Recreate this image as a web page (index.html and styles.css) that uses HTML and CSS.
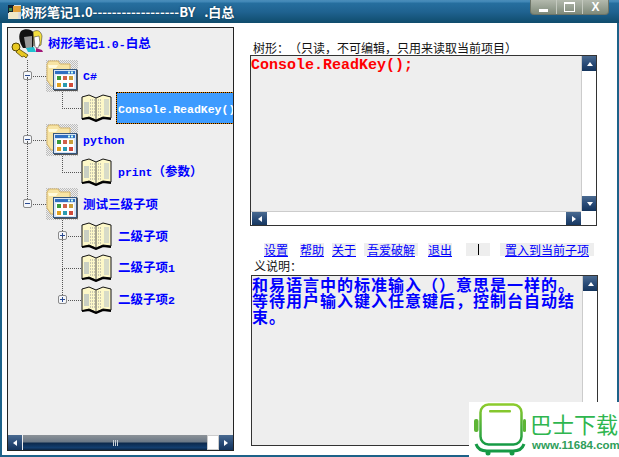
FILE: index.html
```html
<!doctype html>
<html>
<head>
    <meta charset="UTF-8">
    <title>树形笔记1.0</title>
    <link rel="stylesheet" href="styles.css">
</head>
<body>
<svg class="defs" width="0" height="0">
    <defs>
        <pattern id="checker" width="2" height="2" patternUnits="userSpaceOnUse">
            <rect width="2" height="2" fill="#eee"/>
            <rect width="1" height="1" fill="#bbb"/>
            <rect x="1" y="1" width="1" height="1" fill="#bbb"/>
        </pattern>
        <symbol id="i-folder" viewBox="0 0 32 32">
            <rect width="32" height="32" fill="url(#checker)"/>
            <path d="M1 4 L3 1 H12 L14 4 H24 V10 H9 V26 H5 L1 20Z" fill="#f7e4a4" stroke="#d3b36a"/>
            <path d="M2 5 H12 L10 8 H3Z" fill="#fffadb"/>
            <rect x="7.500" y="9.500" width="23" height="20" fill="#d8e4f4" stroke="#35577f"/>
            <rect x="9" y="11" width="20" height="3" fill="#2f6fc2"/>
            <rect x="22" y="11.500" width="2" height="2" fill="#cfe"/><rect x="25" y="11.500" width="2" height="2" fill="#cfe"/>
            <rect x="10" y="15" width="18" height="13" fill="#fff"/>
            <rect x="11" y="16" width="4" height="4" fill="#3a9a3c"/><rect x="17" y="16" width="4" height="4" fill="#d0604a"/><rect x="23" y="16" width="4" height="4" fill="#c9a03a"/>
            <rect x="11" y="23" width="4" height="4" fill="#e0a020"/><rect x="17" y="23" width="4" height="4" fill="#2a9ab0"/><rect x="23" y="23" width="4" height="4" fill="#d04a3a"/>
            <path d="M8 30.500 H31.500 V10" stroke="#555" fill="none"/>
        </symbol>
        <symbol id="i-book" viewBox="0 0 31 28">
            <path d="M1 3 L8 1 L15 4 L22 1 L30 3 V24 L22 23 L15 26 L8 23 L1 25Z" fill="#fdf8c8" stroke="#111"/>
            <path d="M15 4 V26" stroke="#555"/>
            <path d="M1 25 L8 24 L15 27 L22 24 L30 25" fill="none" stroke="#000" stroke-width="2"/>
            <rect x="3" y="8" width="5" height="12" fill="#c9cfc2"/>
            <path d="M9 6 H14 M9 9 H14 M9 12 H14 M9 15 H14 M9 18 H14 M9 21 H14" stroke="#999" stroke-dasharray="1 1"/>
            <path d="M17 6 H21 M17 9 H21 M17 12 H21 M17 15 H21 M17 18 H21 M17 21 H21" stroke="#999" stroke-dasharray="1 1"/>
            <rect x="23" y="5" width="5" height="16" fill="#d7dbc8"/>
        </symbol>
        <symbol id="i-users" viewBox="0 0 32 32">
            <path d="M10 3 C14 0 21 1 23 5 L22 20 H12 C8 14 7 7 10 3Z" fill="#111"/>
            <path d="M13 9 L21 8 V20 L15 21Z" fill="#999"/>
            <path d="M15 20 L23 19 L25 24 H17Z" fill="#20c0d0"/>
            <path d="M25 20 L31 22 L32 24 H25Z" fill="#a01878"/>
            <path d="M22 4 C26 1 30 3 31 8 L30 17 L28 18 L27 10 L24 9 L23 18Z" fill="#f4e040" stroke="#222" stroke-width=".5"/>
            <path d="M23 9 L28 8 L29 15 L27 20 L24 19Z" fill="#fff" stroke="#333" stroke-width=".5"/>
            <circle cx="5" cy="19" r="4" fill="#e8c820" stroke="#554400"/>
            <path d="M8 21 L17 27 L15 30 L13 28 L11 29 L5 24Z" fill="#e8c820" stroke="#554400" stroke-width=".8"/>
        </symbol>
    </defs>
</svg>

<div class="window">
    <div class="title-bar">
        <svg class="app-icon" viewBox="0 0 13 14" width="13" height="14">
            <rect width="13" height="14" fill="#ddd"/>
            <rect x="0" y="0" width="6" height="8" fill="#123"/>
            <rect x="5" y="1" width="8" height="6" fill="#e2a03a"/>
            <rect x="1" y="7" width="9" height="7" fill="#f0e8c8"/>
            <rect x="1" y="3" width="3" height="3" fill="#3a8a4a"/>
        </svg>
        <span class="title-text">树形笔记1.0------------------BY&nbsp;&nbsp; .白总</span>
        <div class="win-btns">
            <span class="win-btn"><i class="g-min"></i></span>
            <span class="win-btn"><i class="g-max"></i></span>
            <span class="win-btn g-close">X</span>
        </div>
    </div>

    <div class="client">
        <div class="tree-panel">
            <ul class="tree">
                <li class="row root"><svg class="ico-user"><use href="#i-users"/></svg><span class="lbl">树形笔记<span class="lat">1.0-</span>白总</span></li>
                <li class="row d1 e16"><b class="exp minus"></b><svg class="ico-folder"><use href="#i-folder"/></svg><span class="lbl"><span class="lat">C#</span></span></li>
                <li class="row d2 e16"><svg class="ico-book"><use href="#i-book"/></svg><span class="lbl sel"><span class="lat">Console.ReadKey()</span></span></li>
                <li class="row d1 e64"><b class="exp minus"></b><svg class="ico-folder"><use href="#i-folder"/></svg><span class="lbl"><span class="lat">python</span></span></li>
                <li class="row d2 e16"><svg class="ico-book"><use href="#i-book"/></svg><span class="lbl"><span class="lat">print</span>（参数）</span></li>
                <li class="row d1 e64"><b class="exp minus"></b><svg class="ico-folder"><use href="#i-folder"/></svg><span class="lbl">测试三级子项</span></li>
                <li class="row d2 e16"><b class="exp plus"></b><svg class="ico-book"><use href="#i-book"/></svg><span class="lbl">二级子项</span></li>
                <li class="row d2 e32"><svg class="ico-book"><use href="#i-book"/></svg><span class="lbl">二级子项<span class="lat">1</span></span></li>
                <li class="row d2 e32"><b class="exp plus"></b><svg class="ico-book"><use href="#i-book"/></svg><span class="lbl">二级子项<span class="lat">2</span></span></li>
            </ul>
            <div class="tree-scroll">
                <span class="dark-btn"><i class="arr left"></i></span>
                <span class="tree-thumb"><em></em><em></em><em></em></span>
                <span class="white-knob"></span>
                <span class="dark-btn"><i class="arr right"></i></span>
            </div>
        </div>

        <div class="side">
            <p class="cap cap-top">树形：（只读，不可编辑，只用来读取当前项目）</p>
            <div class="box box-code">
                <div class="box-text code">Console.ReadKey();</div>
                <div class="vbar">
                    <span class="dark-btn"><i class="arr up"></i></span>
                    <span class="dark-btn"><i class="arr down"></i></span>
                </div>
                <div class="hbar">
                    <span class="dark-btn"><i class="arr left"></i></span>
                    <span class="dark-btn"><i class="arr right"></i></span>
                </div>
                <div class="corner"></div>
            </div>

            <div class="links">
                <a class="lk w-sz" href="#">设置</a>
                <a class="lk w-bz" href="#">帮助</a>
                <a class="lk w-gy" href="#">关于</a>
                <a class="lk w-wa" href="#">吾爱破解</a>
                <a class="lk w-tc" href="#">退出</a>
                <span class="lk w-sep"><i></i></span>
                <a class="lk w-zr" href="#">置入到当前子项</a>
            </div>

            <p class="cap cap-note">义说明：</p>
            <div class="box box-note">
                <div class="box-text note">和易语言中的标准输入（）意思是一样的。等待用户输入键入任意键后，控制台自动结束。</div>
                <div class="vbar">
                    <span class="dark-btn"><i class="arr up"></i></span>
                    <span class="dark-btn"><i class="arr down"></i></span>
                </div>
            </div>
        </div>
    </div>
</div>

<div class="mark">
    <svg class="mark-logo" viewBox="0 0 52 54" width="52" height="54">
        <defs>
            <linearGradient id="lg" x1="0" y1="0" x2="0" y2="1">
                <stop offset="0" stop-color="#8ccb2c"/>
                <stop offset="1" stop-color="#169a45"/>
            </linearGradient>
        </defs>
        <rect x="6.500" y="2.500" width="41" height="40" rx="8" fill="#fff" stroke="url(#lg)" stroke-width="2.500"/>
        <rect x="15" y="8" width="22" height="2.500" rx="1" fill="#85c72e"/>
        <rect x="0" y="17" width="4.500" height="13" rx="2" fill="#5db535"/>
        <rect x="49" y="17" width="3" height="13" rx="1.500" fill="#5db535"/>
        <path d="M2 42 C4 48 9 49 13 49 H39 C43 49 48 48 50 42" fill="none" stroke="#169a45" stroke-width="3"/>
        <circle cx="14" cy="51" r="2.500" fill="#169a45"/><circle cx="38" cy="51" r="2.500" fill="#169a45"/>
    </svg>
    <div class="mark-text">
        <span class="mark-cn">巴士下载</span>
        <span class="mark-url">www.11684.com</span>
    </div>
</div>
</body>
</html>
```

FILE: styles.css
```css
html, body, ul, p { margin: 0; padding: 0; }
ul { list-style: none; }
body { width: 619px; height: 457px; overflow: hidden; position: relative; font-family: "Noto Sans CJK SC", sans-serif; background: #1d6289; text-spacing-trim: space-all; }
.defs { position: absolute; }

.window { height: 457px; display: flex; flex-direction: column; }

/* 标题栏 */
.title-bar { height: 23px; flex: none; display: flex; align-items: center; padding-left: 8px; background: linear-gradient(#4a8dba 0, #3f86b6 2px, #266f9f 3px, #1f6290 12px, #0f4c6c 23px); position: relative; }
.app-icon { flex: none; }
.title-text { color: #fff; font: bold 13px "Noto Sans CJK SC", "Liberation Sans", sans-serif; line-height: 23px; text-shadow: 0 0 2px #0a3048; white-space: nowrap; }
.win-btns { position: absolute; right: 10px; top: 0; width: 79px; height: 15px; display: flex; border: 1px solid #6c7468; border-top: 0; border-radius: 0 0 4px 4px; background: linear-gradient(#b3b9ad, #7f8a7a); box-sizing: border-box; }
.win-btn { flex: 1; display: flex; align-items: center; justify-content: center; border-right: 1px solid #c4c9bf; color: #fff; font: bold 12px "Liberation Sans", sans-serif; }
.win-btn:last-child { border-right: 0; }
.g-min { display: block; width: 9px; height: 3px; background: #fff; margin-top: 6px; }
.g-max { display: block; width: 9px; height: 7px; border: 1px solid #fff; border-top-width: 2px; }

/* 主体 */
.client { flex: none; height: 432px; margin: 0 2px; background: #fff; display: flex; padding: 4px 0 0 5px; box-sizing: border-box; }

/* 左边的树 */
.tree-panel { width: 227px; height: 424px; flex: none; box-sizing: border-box; border: 1px solid #222; background: #eee; display: flex; flex-direction: column; overflow: hidden; }
.tree { flex: 1; color: #00f; font-size: 12.500px; font-weight: 700; }
.row { height: 32px; display: flex; align-items: center; position: relative; white-space: nowrap; }
.row svg { flex: none; position: relative; }
.root { padding-left: 3px; }
.d1 { padding-left: 38px; }
.d2 { padding-left: 73px; }
.ico-user { width: 32px; height: 32px; }
.ico-folder { width: 32px; height: 32px; }
.ico-book { width: 31px; height: 28px; }
.lbl { margin-left: 5px; line-height: 30px; position: relative; }
.d2 .lbl { margin-left: 6px; }
.lat { font-family: "Liberation Mono", monospace; font-size: 11.500px; }
.d2 .sel { margin-left: 4px; }
.sel { flex: none; color: #fff; background: #3c9bff; box-shadow: inset 0 0 0 1px #e08000; outline: 1px dotted #000; outline-offset: -1px; height: 32px; line-height: 31px; padding: 0 2px; width: 130px; box-sizing: border-box; }

/* 虚线 */
.row::before { content: ""; position: absolute; border-left: 1px dotted #555; border-bottom: 1px dotted #555; bottom: 15px; }
.d1::before { left: 19px; width: 18px; }
.d2::before { left: 54px; width: 18px; }
.root::before { display: none; }
.e16::before { height: 16px; }
.e32::before { height: 31px; }
.e64::before { height: 63px; }
.exp { position: absolute; top: 11px; width: 9px; height: 9px; box-sizing: border-box; border: 1px solid #8a8a8a; border-radius: 2px; background: #f4f6fa; }
.d1 .exp { left: 15px; }
.d2 .exp { left: 50px; }
.exp::before { content: ""; position: absolute; left: 1px; top: 3px; width: 5px; height: 1px; background: #2a4a90; }
.plus::after { content: ""; position: absolute; left: 3px; top: 1px; width: 1px; height: 5px; background: #2a4a90; }

.tree-scroll { height: 15px; flex: none; display: flex; }
.tree-scroll .dark-btn { width: 14px; height: 15px; }
.tree-thumb { flex: 1; margin-left: 1px; display: flex; gap: 1px; align-items: center; justify-content: center; background: linear-gradient(#8c9298 0, #6b7886 45%, #0c2a4e 55%, #123e70 85%, #0a2340 100%); }
.tree-thumb em { display: block; width: 1px; height: 6px; background: #c8d0d8; }
.white-knob { width: 12px; background: #fff; border: 1px solid #ccc; box-sizing: border-box; }

.dark-btn { display: flex; flex: none; align-items: center; justify-content: center; width: 15px; height: 15px; background: linear-gradient(#4a6a90 0, #2a4c78 50%, #14345c 100%); }
.arr { display: block; width: 0; height: 0; border: 3px solid transparent; }
.arr.up { border-bottom: 4px solid #fff; border-top: 0; }
.arr.down { border-top: 4px solid #fff; border-bottom: 0; }
.arr.left { border-right: 4px solid #fff; border-left: 0; }
.arr.right { border-left: 4px solid #fff; border-right: 0; }

/* 右边 */
.side { margin-left: 16px; width: 349px; display: flex; flex-direction: column; }
.cap { font-size: 12px; line-height: 14px; color: #111; }
.cap-top { margin: 14px 0 0 3px; }
.box { box-sizing: border-box; border: 1px solid #333; background: #eee; display: grid; overflow: hidden; }
.box-code { width: 347px; height: 171px; grid-template-columns: 1fr 15px; grid-template-rows: 1fr 14px; }
.box-note { width: 347px; height: 171px; margin-left: 1px; grid-template-columns: 1fr 15px; }
.box-text { font-weight: 700; min-width: 0; }
.code { color: #f00; font: bold 15px/18px "Liberation Mono", monospace; padding-top: 1px; }
.note { color: #00f; font-size: 16px; line-height: 16px; letter-spacing: 1px; padding-right: 4px; }
.vbar { background: #fff; border-left: 1px solid #ccc; display: flex; flex-direction: column; justify-content: space-between; }
.hbar { background: #fff; border-top: 1px solid #ccc; display: flex; justify-content: space-between; padding-left: 1px; }
.hbar .dark-btn { height: 14px; }
.corner { background: #fff; }

.links { display: flex; margin-top: 17px; height: 13px; padding-left: 14px; }
.lk { flex: none; display: block; background: #eee; color: #00f; font-size: 12px; line-height: 13px; text-align: center; text-decoration: underline; white-space: nowrap; }
.w-sz { width: 24px; }
.w-bz { width: 24px; margin-left: 12px; }
.w-gy { width: 24px; margin-left: 8px; }
.w-wa { width: 54px; margin-left: 8px; }
.w-tc { width: 24px; margin-left: 10px; }
.w-sep { width: 24px; margin-left: 14px; display: flex; justify-content: center; }
.w-sep i { display: block; width: 1px; height: 11px; background: #000; margin-top: 1px; }
.w-zr { width: 94px; margin-left: 10px; }
.cap-note { margin: 4px 0 3px 4px; line-height: 12px; }

/* 水印 */
.mark { position: absolute; left: 469px; top: 402px; width: 150px; height: 55px; background: #fff; display: flex; gap: 4px; padding-left: 5px; box-sizing: border-box; }
.mark-logo { flex: none; }
.mark-text { display: flex; flex-direction: column; align-items: flex-start; padding-top: 7px; }
.mark-cn { font-size: 22px; line-height: 28px; color: #2fb64f; white-space: nowrap; }
.mark-url { font: bold 11.500px/18px "Liberation Sans", sans-serif; color: #2f9e5a; white-space: nowrap; margin: -1px 0 0 2px; }
```
